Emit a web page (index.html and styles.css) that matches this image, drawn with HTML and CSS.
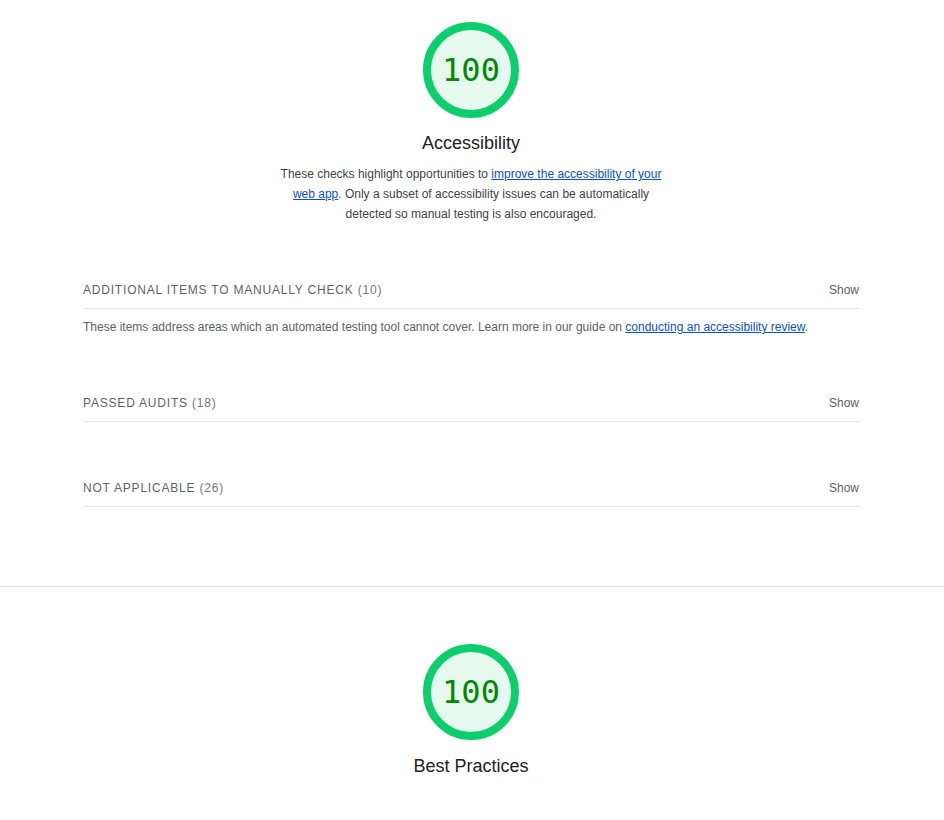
FILE: index.html
```html
<!DOCTYPE html>
<html>
<head>
<meta charset="utf-8">
<link rel="stylesheet" href="styles.css">
</head>
<body>
<section class="category">
  <div class="gauge">
    <svg viewBox="0 0 96 96" width="96" height="96">
      <circle cx="48" cy="48" r="44" class="gauge-base"/>
    </svg>
    <span class="gauge-num">100</span>
  </div>
  <div class="cat-title">Accessibility</div>
  <p class="cat-desc">These checks highlight opportunities to <a href="#">improve the accessibility of your web app</a>. Only a subset of accessibility issues can be automatically detected so manual testing is also encouraged.</p>

  <div class="groups">
    <div class="group g1">
      <div class="group-head"><span class="group-title">Additional items to manually check <span class="count">(10)</span></span><span class="show">Show</span></div>
      <p class="group-desc">These items address areas which an automated testing tool cannot cover. Learn more in our guide on <a href="#">conducting an accessibility review</a>.</p>
    </div>
    <div class="group g2">
      <div class="group-head"><span class="group-title">Passed audits <span class="count">(18)</span></span><span class="show">Show</span></div>
    </div>
    <div class="group g3">
      <div class="group-head"><span class="group-title">Not applicable <span class="count">(26)</span></span><span class="show">Show</span></div>
    </div>
  </div>
</section>
<hr class="divider">
<section class="category second">
  <div class="gauge">
    <svg viewBox="0 0 96 96" width="96" height="96">
      <circle cx="48" cy="48" r="44" class="gauge-base"/>
    </svg>
    <span class="gauge-num">100</span>
  </div>
  <div class="cat-title">Best Practices</div>
</section>
</body>
</html>
```
FILE: styles.css
```css
html, body {
  margin: 0;
  padding: 0;
  background: #fff;
}
body {
  font-family: "Liberation Sans", Arial, sans-serif;
  color: #212121;
}
.category {
  padding: 22px 85px 0 83px;
  display: flex;
  flex-direction: column;
  align-items: center;
}
.gauge {
  position: relative;
  width: 96px;
  height: 96px;
}
.gauge svg {
  display: block;
}
.gauge-base {
  fill: #e6f9ef;
  stroke: #0cce6b;
  stroke-width: 8;
}
.gauge-num {
  position: absolute;
  inset: 0;
  display: flex;
  align-items: center;
  justify-content: center;
  font-family: "DejaVu Sans Mono", monospace;
  font-size: 32px;
  color: #008800;
  line-height: 1;
}
.cat-title {
  margin-top: 13px;
  font-size: 18px;
  line-height: 24px;
  color: #212121;
}
.cat-desc {
  margin: 9px 0 0;
  max-width: 400px;
  text-align: center;
  font-size: 12px;
  line-height: 20px;
  color: #424242;
}
a {
  color: #0c50c7;
  text-decoration: underline;
}
.groups {
  align-self: stretch;
  display: flex;
  flex-direction: column;
}
.group-head {
  display: flex;
  justify-content: space-between;
  align-items: center;
  height: 20px;
  padding-bottom: 8px;
  border-bottom: 1px solid #e6e6e6;
}
.group-title {
  font-size: 12px;
  letter-spacing: 0.8px;
  text-transform: uppercase;
  color: #5f6368;
}
.count {
  color: #757575;
}
.show {
  font-size: 12px;
  color: #616161;
}
.g1 { margin-top: 56px; }
.g2 { margin-top: 56px; }
.g3 { margin-top: 56px; }
.group-desc {
  margin: 8px 0 0;
  font-size: 12px;
  line-height: 20px;
  color: #616161;
}
.divider {
  margin: 79px 0 0;
  border: 0;
  border-top: 1px solid #e0e0e0;
  height: 0;
}
.second {
  padding-top: 57px;
}
.second .cat-title {
  margin-top: 14px;
}
```
